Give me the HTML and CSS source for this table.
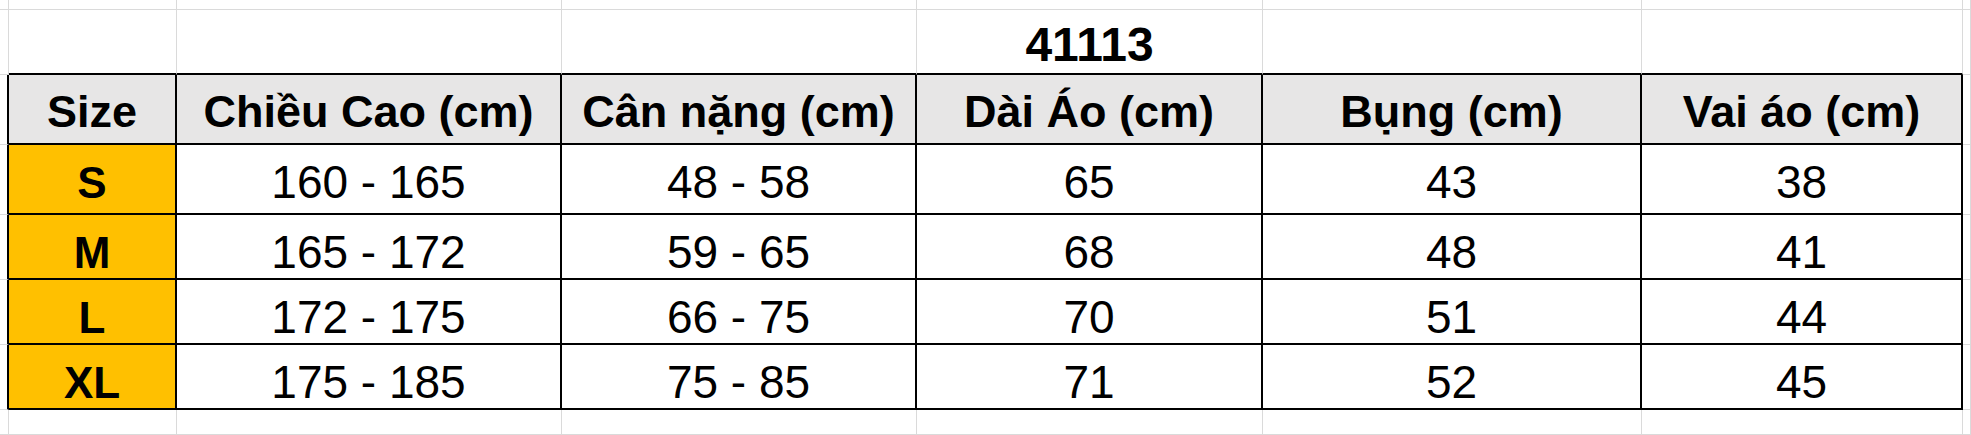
FILE: index.html
```html
<!DOCTYPE html>
<html lang="vi">
<head>
<meta charset="utf-8">
<title>41113</title>
<link rel="stylesheet" href="styles.css">
</head>
<body>
<div class="sheet">
  <!-- row 1 -->
  <div class="c"></div><div class="c"></div><div class="c"></div><div class="c"></div><div class="c"></div><div class="c"></div><div class="c"></div><div class="c"></div>
  <!-- row 2 -->
  <div class="c"></div>
  <div class="c top"></div>
  <div class="c top"></div>
  <div class="c top"></div>
  <div class="c top title">41113</div>
  <div class="c top"></div>
  <div class="c top"></div>
  <div class="c"></div>
  <!-- row 3 header -->
  <div class="c left"></div>
  <div class="c t head">Size</div>
  <div class="c t head">Chiều Cao (cm)</div>
  <div class="c t head">Cân nặng (cm)</div>
  <div class="c t head">Dài Áo (cm)</div>
  <div class="c t head">Bụng (cm)</div>
  <div class="c t head">Vai áo (cm)</div>
  <div class="c"></div>
  <!-- row S -->
  <div class="c left"></div>
  <div class="c t size">S</div>
  <div class="c t val">160 - 165</div>
  <div class="c t val">48 - 58</div>
  <div class="c t val">65</div>
  <div class="c t val">43</div>
  <div class="c t val">38</div>
  <div class="c"></div>
  <!-- row M -->
  <div class="c left"></div>
  <div class="c t size">M</div>
  <div class="c t val">165 - 172</div>
  <div class="c t val">59 - 65</div>
  <div class="c t val">68</div>
  <div class="c t val">48</div>
  <div class="c t val">41</div>
  <div class="c"></div>
  <!-- row L -->
  <div class="c left"></div>
  <div class="c t size">L</div>
  <div class="c t val">172 - 175</div>
  <div class="c t val">66 - 75</div>
  <div class="c t val">70</div>
  <div class="c t val">51</div>
  <div class="c t val">44</div>
  <div class="c"></div>
  <!-- row XL -->
  <div class="c left"></div>
  <div class="c t size">XL</div>
  <div class="c t val">175 - 185</div>
  <div class="c t val">75 - 85</div>
  <div class="c t val">71</div>
  <div class="c t val">52</div>
  <div class="c t val">45</div>
  <div class="c"></div>
  <!-- row 8 -->
  <div class="c"></div><div class="c"></div><div class="c"></div><div class="c"></div><div class="c"></div><div class="c"></div><div class="c"></div><div class="c"></div>
</div>
</body>
</html>
```
FILE: styles.css
```css
html, body {
  margin: 0;
  padding: 0;
  background: #ffffff;
}

body {
  font-family: "Liberation Sans", Arial, sans-serif;
  color: #000000;
  overflow: hidden;
}

.sheet {
  display: grid;
  width: 1971px;
  height: 435px;
  grid-template-columns: 9px 168px 385px 355px 346px 379px 321px 1fr;
  grid-template-rows: 10px 65px 70px 70px 65px 65px 65px 1fr;
}

.c {
  box-sizing: border-box;
  border-right: 1px solid #dadada;
  border-bottom: 1px solid #dadada;
  text-align: center;
  white-space: nowrap;
  overflow: visible;
}

.top {
  border-bottom: 2px solid #000000;
}

.left {
  border-right: 2px solid #000000;
}

.t {
  border-right: 2px solid #000000;
  border-bottom: 2px solid #000000;
}

.title {
  font-weight: 700;
  font-size: 48px;
  line-height: 46px;
  padding-top: 12px;
}

.head {
  background: #e7e6e6;
  font-weight: 700;
  font-size: 45px;
  line-height: 46px;
  padding-top: 14px;
}

.size {
  background: #ffc000;
  font-weight: 700;
  font-size: 44px;
  line-height: 46px;
  padding-top: 15px;
}

.val {
  font-size: 46px;
  line-height: 46px;
  padding-top: 14px;
}
```
